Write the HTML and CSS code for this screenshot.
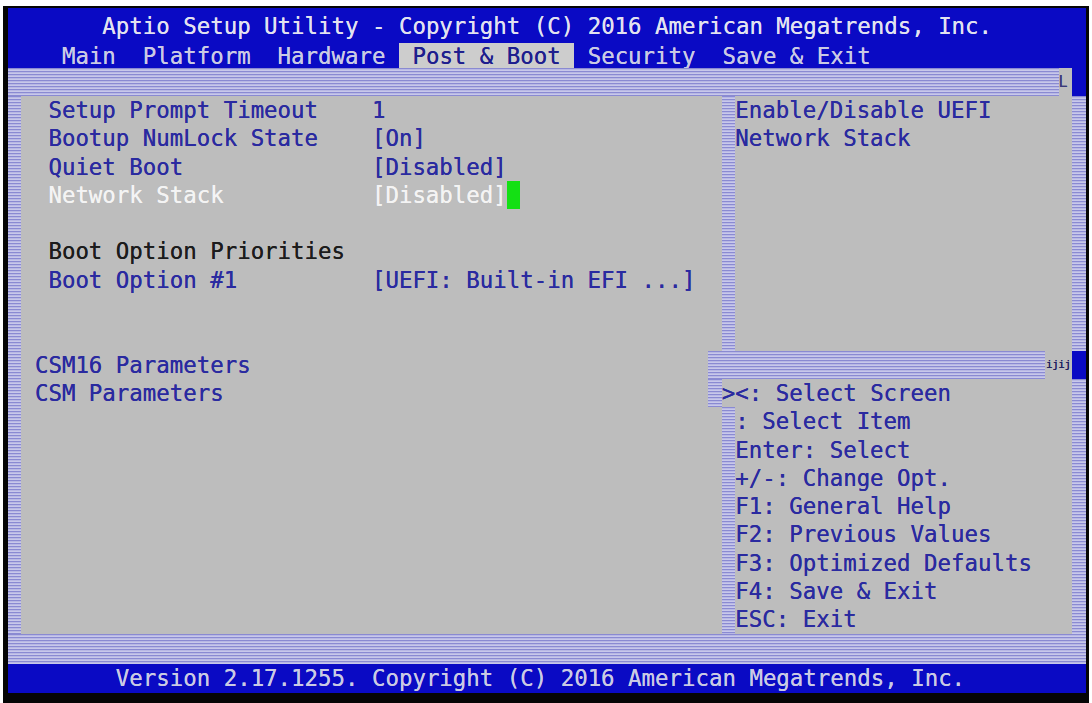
FILE: index.html
```html
<!DOCTYPE html>
<html lang="en">
  <head>
    <meta charset="UTF-8" />
    <meta name="viewport" content="width=device-width, initial-scale=1.0" />
    <title>Aptio Setup Utility</title>
    <link rel="stylesheet" href="styles.css">
  </head>
  <body>
    <div class="screen">
      <header class="title">Aptio Setup Utility - Copyright (C) 2016 American Megatrends, Inc.</header>
      <nav class="tabs">    Main  Platform  Hardware <span class="tab-active"> Post &amp; Boot </span> Security  Save &amp; Exit</nav>

      <main class="frame">
        <!-- top border line -->
        <div class="shade band-top"></div>
        <div class="glyph corner-top">L</div>
        <div class="blue-cell cell-top"></div>

        <div class="shade edge-left"></div>

        <!-- settings list -->
        <div class="menu">
          <div class="row"><span class="label">Setup Prompt Timeout</span><span>1</span></div>
          <div class="row"><span class="label">Bootup NumLock State</span><span>[On]</span></div>
          <div class="row"><span class="label">Quiet Boot</span><span>[Disabled]</span></div>
          <div class="row selected"><span class="label">Network Stack</span><span>[Disabled]</span><span class="cursor"></span></div>
          <div class="row"></div>
          <div class="row heading"><span class="label">Boot Option Priorities</span></div>
          <div class="row"><span class="label">Boot Option #1</span><span>[UEFI: Built-in EFI ...]</span></div>
          <div class="row"></div>
          <div class="row"></div>
          <div class="row submenu">CSM16 Parameters</div>
          <div class="row submenu">CSM Parameters</div>
        </div>

        <!-- help panel -->
        <div class="shade divider-top"></div>
        <div class="help">
          <div class="row">Enable/Disable UEFI</div>
          <div class="row">Network Stack</div>
        </div>
        <div class="shade edge-right-top"></div>

        <div class="shade rule-mid"></div>
        <div class="glyph corner-mid">ijij</div>
        <div class="blue-cell cell-mid"></div>

        <div class="shade stub"></div>
        <div class="row keys-first">&gt;&lt;: Select Screen</div>

        <div class="shade divider-bottom"></div>
        <div class="keys">
          <div class="row">: Select Item</div>
          <div class="row">Enter: Select</div>
          <div class="row">+/-: Change Opt.</div>
          <div class="row">F1: General Help</div>
          <div class="row">F2: Previous Values</div>
          <div class="row">F3: Optimized Defaults</div>
          <div class="row">F4: Save &amp; Exit</div>
          <div class="row">ESC: Exit</div>
        </div>
        <div class="shade edge-right-bottom"></div>

        <div class="shade band-bottom"></div>
      </main>

      <footer class="status">Version 2.17.1255. Copyright (C) 2016 American Megatrends, Inc.</footer>
    </div>
  </body>
</html>
```

FILE: styles.css
```css
body {
  margin: 0;
  padding: 6px 0 0 3px;
  background-color: #fff;
}

.screen {
  display: inline-block;
  vertical-align: top;
  background-color: #050505;
  padding: 2px 3px 10px 5px;
  font-family: "DejaVu Sans Mono", "Liberation Mono", monospace;
  font-size: 22.4px;
  text-shadow: 0 0 0.5px currentColor;
}

.title,
.tabs,
.status {
  width: 80ch;
  white-space: pre;
  background-color: #0a0ac4;
}

.title {
  height: 35px;
  line-height: 36px;
  padding-left: 7ch;
  box-sizing: border-box;
  color: #e2e2f0;
}

.tabs {
  height: 25px;
  line-height: 26px;
  color: #cacae4;
}

.tab-active {
  display: inline-block;
  vertical-align: top;
  height: 25px;
  background-color: #cdcdcd;
  color: #1e1e8e;
}

.status {
  height: 29px;
  line-height: 29px;
  padding-left: 8ch;
  box-sizing: border-box;
  color: #cacae4;
}

/* text mode grid: 80 columns, rows 2 to 22 */
.frame {
  display: grid;
  grid-template-columns: repeat(80, 1ch);
  grid-template-rows: 28px repeat(19, 28.3px) 30px;
  background-color: #bdbdbd;
}

.shade {
  background-color: #a4a4dc;
  background-image: repeating-linear-gradient(
    to bottom,
    #8a8ad2 0,
    #8a8ad2 1px,
    #b8b8e4 1px,
    #b8b8e4 2px,
    #c8c8ea 2px,
    #c8c8ea 3px
  );
}

.blue-cell {
  background-color: #0a0ac4;
}

.glyph {
  color: #3a3a7a;
  font-size: 15px;
  line-height: 28px;
  white-space: pre;
  overflow: hidden;
}

.band-top { grid-row: 1; grid-column: 1 / 79; }
.corner-top { grid-row: 1; grid-column: 79 / 80; }
.cell-top { grid-row: 1; grid-column: 80 / 81; }

.edge-left { grid-row: 2 / 21; grid-column: 1 / 2; }

.menu { grid-row: 2 / 21; grid-column: 2 / 53; color: #2a2aa0; }

.divider-top { grid-row: 2 / 11; grid-column: 54 / 55; }
.help { grid-row: 2 / 11; grid-column: 55 / 80; color: #2a2aa0; }
.edge-right-top { grid-row: 2 / 11; grid-column: 80 / 81; }

.rule-mid { grid-row: 11; grid-column: 53 / 78; }
.corner-mid {
  grid-row: 11;
  grid-column: 78 / 80;
  font-size: 11px;
  letter-spacing: -0.5px;
  padding-left: 1px;
  color: #202060;
}
.cell-mid { grid-row: 11; grid-column: 80 / 81; }

.stub { grid-row: 12; grid-column: 53 / 54; }
.keys-first { grid-row: 12; grid-column: 54 / 80; color: #2a2aa0; }

.divider-bottom { grid-row: 13 / 21; grid-column: 54 / 55; }
.keys { grid-row: 13 / 21; grid-column: 55 / 80; color: #2a2aa0; }
.edge-right-bottom { grid-row: 12 / 21; grid-column: 80 / 81; }

.band-bottom { grid-row: 21; grid-column: 1 / 81; }

.row {
  display: flex;
  height: 28.3px;
  line-height: 28.3px;
  white-space: pre;
}

.menu .row {
  padding-left: 2ch;
}

.menu .submenu {
  padding-left: 1ch;
}

.label {
  width: 24ch;
  flex-shrink: 0;
}

.heading {
  color: #1c1c1c;
}

.selected {
  color: #f4f4f4;
}

.cursor {
  width: 1ch;
  background-color: #14e014;
}
```
